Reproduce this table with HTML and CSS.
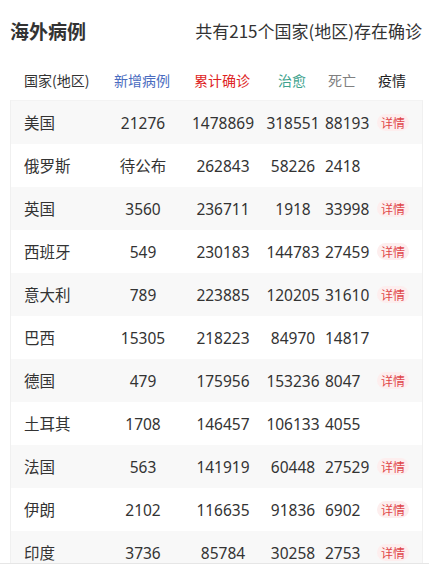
FILE: index.html
```html
<!DOCTYPE html>
<html lang="zh-CN">
<head>
<meta charset="utf-8">
<title>海外病例</title>
<link rel="stylesheet" href="styles.css">
</head>
<body>
<div class="top">
  <h1 class="title">海外病例</h1>
  <div class="summary">共有215个国家(地区)存在确诊</div>
</div>
<div class="head row">
  <div class="c-name">国家(地区)</div>
  <div class="c-new blue">新增病例</div>
  <div class="c-total red">累计确诊</div>
  <div class="c-cure green">治愈</div>
  <div class="c-dead gray h-dead">死亡</div>
  <div class="c-more h-more">疫情</div>
</div>
<div class="table">
  <div class="row data"><div class="c-name">美国</div><div class="c-new">21276</div><div class="c-total">1478869</div><div class="c-cure">318551</div><div class="c-dead">88193</div><div class="c-more"><span class="badge">详情</span></div></div>
  <div class="row data"><div class="c-name">俄罗斯</div><div class="c-new">待公布</div><div class="c-total">262843</div><div class="c-cure">58226</div><div class="c-dead">2418</div><div class="c-more"></div></div>
  <div class="row data"><div class="c-name">英国</div><div class="c-new">3560</div><div class="c-total">236711</div><div class="c-cure">1918</div><div class="c-dead">33998</div><div class="c-more"><span class="badge">详情</span></div></div>
  <div class="row data"><div class="c-name">西班牙</div><div class="c-new">549</div><div class="c-total">230183</div><div class="c-cure">144783</div><div class="c-dead">27459</div><div class="c-more"><span class="badge">详情</span></div></div>
  <div class="row data"><div class="c-name">意大利</div><div class="c-new">789</div><div class="c-total">223885</div><div class="c-cure">120205</div><div class="c-dead">31610</div><div class="c-more"><span class="badge">详情</span></div></div>
  <div class="row data"><div class="c-name">巴西</div><div class="c-new">15305</div><div class="c-total">218223</div><div class="c-cure">84970</div><div class="c-dead">14817</div><div class="c-more"></div></div>
  <div class="row data"><div class="c-name">德国</div><div class="c-new">479</div><div class="c-total">175956</div><div class="c-cure">153236</div><div class="c-dead">8047</div><div class="c-more"><span class="badge">详情</span></div></div>
  <div class="row data"><div class="c-name">土耳其</div><div class="c-new">1708</div><div class="c-total">146457</div><div class="c-cure">106133</div><div class="c-dead">4055</div><div class="c-more"></div></div>
  <div class="row data"><div class="c-name">法国</div><div class="c-new">563</div><div class="c-total">141919</div><div class="c-cure">60448</div><div class="c-dead">27529</div><div class="c-more"><span class="badge">详情</span></div></div>
  <div class="row data"><div class="c-name">伊朗</div><div class="c-new">2102</div><div class="c-total">116635</div><div class="c-cure">91836</div><div class="c-dead">6902</div><div class="c-more"><span class="badge">详情</span></div></div>
  <div class="row data"><div class="c-name">印度</div><div class="c-new">3736</div><div class="c-total">85784</div><div class="c-cure">30258</div><div class="c-dead">2753</div><div class="c-more"><span class="badge">详情</span></div></div>
</div>
<div class="bottom-bar"></div>
</body>
</html>
```

FILE: styles.css
```css
* { box-sizing: border-box; }
html, body { margin: 0; padding: 0; background: #fff; }
body {
  font-family: "Noto Sans CJK SC", "Noto Sans", sans-serif;
  color: #333;
  width: 429px;
  overflow: hidden;
}
.top {
  height: 60px;
  display: flex;
  align-items: center;
  justify-content: space-between;
  padding: 0 7px 0 10px;
}
.title {
  margin: 0;
  font-size: 19px;
  font-weight: bold;
  color: #333;
}
.summary {
  font-size: 17px;
  color: #333;
  white-space: nowrap;
}
.row {
  display: grid;
  grid-template-columns: 94px 76px 84px 56px 52px 51px;
  align-items: center;
}
.head {
  margin-left: 10px;
  width: 413px;
  height: 40px;
  font-size: 14px;
  color: #333;
}
.table {
  margin-left: 10px;
  width: 413px;
  border-left: 1px solid #f0f0f0;
  border-right: 1px solid #f0f0f0;
  border-top: 1px solid #f3f3f3;
}
.data {
  height: 43px;
  font-size: 15.5px;
  color: #333;
  font-family: "Noto Sans", "Noto Sans CJK SC", sans-serif;
}
.data:nth-child(odd) { background: #f8f8f8; }
.c-name { padding-left: 14px; white-space: nowrap; }
.head .c-name { padding-left: 14px; }
.data .c-name { padding-left: 13px; }
.c-new, .c-total, .c-cure { text-align: center; white-space: nowrap; }
.c-dead { padding-left: 4px; white-space: nowrap; }
.c-more { padding-left: 4px; display: flex; align-items: center; }
.h-dead { padding-left: 8px; }
.h-more { padding-left: 6px; color: #222; }
.blue { color: #4a6cc0; }
.red { color: #de1f1f; }
.green { color: #3ea38e; }
.gray { color: #808080; }
.badge {
  display: block;
  background: #fdeeee;
  color: #e0464a;
  font-family: "Noto Sans CJK SC", sans-serif;
  font-size: 12px;
  line-height: 17px;
  height: 17px;
  padding: 0 4px;
  border-radius: 9px;
}
.bottom-bar {
  position: fixed;
  left: 0;
  right: 0;
  top: 563px;
  height: 10px;
  background: #fff;
  border-top: 1px solid #e6e6e6;
}
```
